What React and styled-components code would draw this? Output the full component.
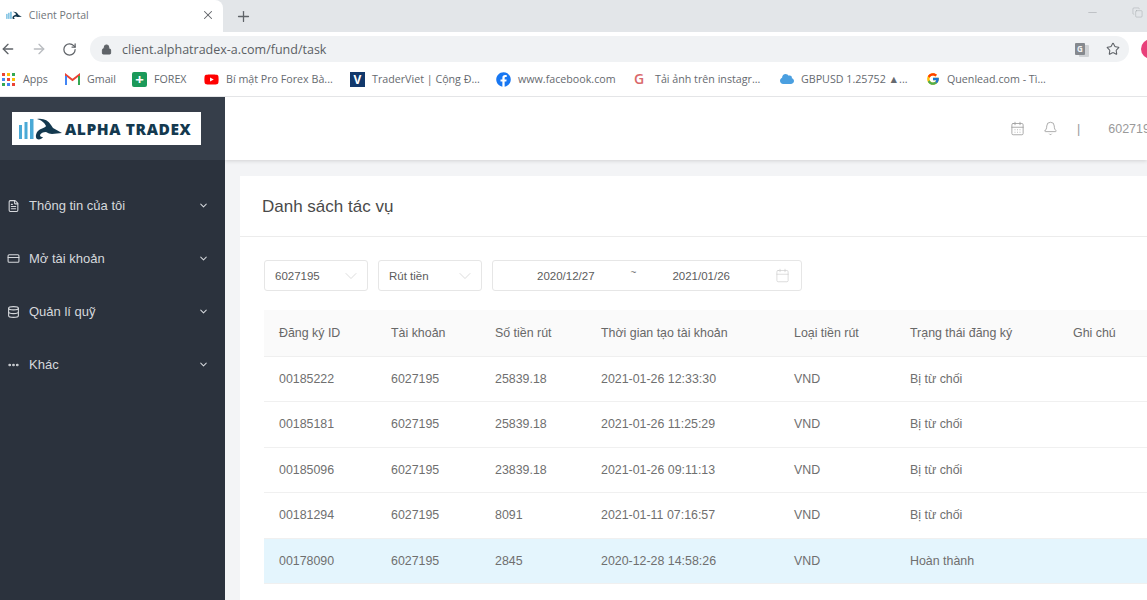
import styled, { createGlobalStyle } from 'styled-components'
import {
  ArrowLeft, ArrowRight, RotateCw, Lock, Star, X, Plus, Minus, Copy,
  FileText, CreditCard, Database, MoreHorizontal, ChevronDown, Calendar, Bell, CalendarDays,
} from 'lucide-react'
import { FaFacebook, FaYoutube, FaCloud } from 'react-icons/fa'
import { FcGoogle } from 'react-icons/fc'

const Global = createGlobalStyle`
  html, body { margin: 0; padding: 0; height: 600px; overflow: hidden; background: #fff; }
  * { box-sizing: border-box; }
  #root { width: 1147px; height: 600px; overflow: hidden; font-family: "Liberation Sans", Arial, sans-serif; }
`

const Window = styled.div`
  width: 1147px;
  height: 600px;
  display: flex;
  flex-direction: column;
  overflow: hidden;
`

const TabStrip = styled.div`
  height: 32px;
  flex: none;
  background: #e3e6e9;
  display: flex;
  align-items: center;
`

const Tab = styled.div`
  width: 223px;
  height: 32px;
  background: #fff;
  border-top-right-radius: 8px;
  display: flex;
  align-items: center;
  padding: 0 8px 2px 6px;
  font-family: "Open Sans", sans-serif;
  font-size: 10.5px;
  color: #70757a;
`

const TabTitle = styled.span`
  margin-left: 7px;
  flex: 1;
`

const NewTab = styled.div`
  margin-left: 12px;
  display: flex;
  color: #5f6368;
`

const WinControls = styled.div`
  margin-left: auto;
  display: flex;
  align-items: center;
  gap: 33px;
  padding-right: 4px;
  margin-top: -8px;
  color: #a0a4a8;
`

const Toolbar = styled.div`
  height: 32px;
  flex: none;
  background: #fff;
  display: flex;
  align-items: center;
  padding: 2px 0 0;
`

const NavButton = styled.div`
  width: 31px;
  display: flex;
  color: ${({ $off }) => ($off ? '#b9bcc0' : '#5f6368')};
`

const Omnibox = styled.div`
  margin-left: -3px;
  width: 1039px;
  height: 26px;
  border-radius: 13px;
  background: #f0f2f4;
  display: flex;
  align-items: center;
  padding: 0 9px 0 11px;
  font-family: "Open Sans", sans-serif;
  font-size: 12.5px;
  color: #5b5f64;
`

const Url = styled.span`
  margin-left: 10px;
  flex: 1;
`

const TranslateIcon = styled.div`
  width: 10px;
  height: 12px;
  margin-right: 21px;
  background: #85898e;
  border-radius: 1px;
  box-shadow: 4px 2px 0 0 #cfd2d5;
  font-size: 8px;
  font-weight: 700;
  line-height: 12px;
  text-align: center;
  color: #f0f2f4;
`

const Avatar = styled.div`
  position: absolute;
  top: 39px;
  left: 1141px;
  width: 20px;
  height: 20px;
  border-radius: 50%;
  background: #e8407a;
`

const Bookmarks = styled.div`
  height: 33px;
  flex: none;
  background: #fff;
  border-bottom: 1px solid #e4e5e7;
  display: flex;
  align-items: center;
  padding: 0 0 2px 2px;
  font-family: "Open Sans", sans-serif;
  font-size: 10.7px;
  color: #666a6f;
`

const Bookmark = styled.div`
  width: ${({ $w }) => $w}px;
  flex: none;
  display: flex;
  align-items: center;
  gap: 7px;
  white-space: nowrap;
`

const AppsGrid = styled.div`
  width: 14px;
  display: grid;
  grid-template-columns: repeat(3, 3px);
  gap: 2px;
`

const AppsDot = styled.i`
  width: 3px;
  height: 3px;
  background: ${({ $c }) => $c};
`

const ForexIcon = styled.div`
  width: 15px;
  height: 15px;
  border-radius: 2px;
  background: #1b9a5a;
  color: #fff;
  font-size: 15px;
  font-weight: 700;
  line-height: 14px;
  text-align: center;
`

const TraderIcon = styled.div`
  width: 15px;
  height: 15px;
  background: #12386b;
  color: #fff;
  font-size: 12px;
  font-weight: 700;
  line-height: 15px;
  text-align: center;
`

const GLetter = styled.span`
  width: 14px;
  font-size: 14px;
  font-weight: 600;
  color: #d9686a;
  line-height: 14px;
`

const AppBody = styled.div`
  flex: 1;
  min-height: 0;
  display: flex;
`

const Sidebar = styled.aside`
  width: 225px;
  flex: none;
  background: #2b323d;
  color: #d5d8dc;
`

const LogoArea = styled.div`
  height: 63px;
  background: #363e4a;
  padding: 15px 0 0 12px;
`

const Logo = styled.div`
  width: 189px;
  height: 33px;
  background: #fff;
  display: flex;
  align-items: center;
  padding-left: 6px;
  gap: 3px;
`

const LogoText = styled.span`
  font-family: "Open Sans", sans-serif;
  font-weight: 800;
  font-size: 15.5px;
  letter-spacing: 0.6px;
  color: #14394f;
  white-space: nowrap;
`

const Menu = styled.nav`
  padding-top: 19px;
`

const MenuItem = styled.div`
  height: 53px;
  display: flex;
  align-items: center;
  padding: 0 16px 0 7px;
  font-size: 13px;
  gap: 9px;
`

const MenuIcon = styled.div`
  width: 13px;
  display: flex;
  justify-content: center;
`

const MenuLabel = styled.span`
  flex: 1;
`

const Main = styled.main`
  flex: 1;
  min-width: 0;
  background: #f3f4f6;
  overflow: hidden;
`

const TopBar = styled.header`
  height: 63px;
  background: #fff;
  box-shadow: 0 1px 4px rgba(0, 0, 0, 0.14);
  display: flex;
  align-items: center;
  padding-left: 785px;
  color: #9a9a9a;
  font-size: 12.5px;
  white-space: nowrap;
`

const TopDivider = styled.span`
  margin: 0 28px 0 19px;
`

const TopIcon = styled.div`
  display: flex;
  margin-right: ${({ $gap }) => $gap || 0}px;
`

const Card = styled.section`
  margin: 16px 0 0 15px;
  width: 1000px;
  background: #fff;
  height: 440px;
`

const CardTitle = styled.h2`
  margin: 0;
  height: 61px;
  border-bottom: 1px solid #ececec;
  padding: 20px 0 0 22px;
  font-size: 17px;
  line-height: 22px;
  font-weight: 400;
  color: #4a4a4a;
`

const CardBody = styled.div`
  padding: 23px 0 0 24px;
`

const Filters = styled.div`
  display: flex;
  gap: 10px;
  margin-bottom: 19px;
`

const Control = styled.div`
  width: ${({ $w }) => $w}px;
  height: 31px;
  border: 1px solid #e6e6e6;
  border-radius: 3px;
  display: flex;
  align-items: center;
  font-size: 11.5px;
  color: #5c5c5c;
  background: #fff;
`

const SelectText = styled.span`
  flex: 1;
  padding-left: 10px;
`

const SelectArrow = styled.div`
  display: flex;
  color: #c3c3c3;
  margin-right: 6px;
`

const DateText = styled.span`
  margin-left: ${({ $ml }) => $ml}px;
  white-space: nowrap;
`

const Tilde = styled.span`
  margin-left: 36px;
  margin-top: -6px;
  color: #777;
  font-size: 10px;
`

const DateIcon = styled.div`
  margin-left: 45px;
  display: flex;
  color: #c9c9c9;
`

const Table = styled.table`
  border-collapse: collapse;
  table-layout: fixed;
  width: 1000px;
  font-size: 12.4px;
`

const Th = styled.th`
  width: ${({ $w }) => $w}px;
  height: 46px;
  padding: 0 0 0 15px;
  text-align: left;
  font-weight: 400;
  background: #fafafa;
  border-bottom: 1px solid #efefef;
  color: #686868;
  white-space: nowrap;
`

const Td = styled.td`
  height: 45.5px;
  padding: 0 0 0 15px;
  color: #6f6f6f;
  border-bottom: 1px solid #f0f0f0;
  background: ${({ $active }) => ($active ? '#e4f5fd' : '#fff')};
  white-space: nowrap;
`

const APP_DOTS = ['#ea4335', '#fbbc05', '#34a853', '#4285f4', '#ea4335', '#fbbc05', '#34a853', '#4285f4', '#ea4335']

const MENU = [
  { icon: <FileText size={14} />, label: 'Thông tin của tôi' },
  { icon: <CreditCard size={15} />, label: 'Mở tài khoản' },
  { icon: <Database size={14} />, label: 'Quản lí quỹ' },
  { icon: <MoreHorizontal size={14} strokeWidth={3} />, label: 'Khác' },
]

const COLS = [
  ['Đăng ký ID', 112], ['Tài khoản', 104], ['Số tiền rút', 106], ['Thời gian tạo tài khoản', 193],
  ['Loại tiền rút', 116], ['Trạng thái đăng ký', 163], ['Ghi chú', 206],
]

const ROWS = [
  ['00185222', '25839.18', '2021-01-26 12:33:30', 'Bị từ chối'],
  ['00185181', '25839.18', '2021-01-26 11:25:29', 'Bị từ chối'],
  ['00185096', '23839.18', '2021-01-26 09:11:13', 'Bị từ chối'],
  ['00181294', '8091', '2021-01-11 07:16:57', 'Bị từ chối'],
  ['00178090', '2845', '2020-12-28 14:58:26', 'Hoàn thành'],
]

function Mark({ small }) {
  const s = small ? 0.36 : 1
  return (
    <svg width={44 * s} height={24 * s} viewBox="0 0 44 24">
      <rect x="1" y="8" width="3" height="14" fill="#4aa9d6" />
      <rect x="6.500" y="5" width="3" height="17" fill="#4aa9d6" />
      <rect x="12" y="2" width="3.500" height="20" fill="#4aa9d6" />
      <path d="M19 2c6-1 11 1 14 6l2 3 9 5-10 1c-2 0-4-1-6-2-3 0-5 1-6 3 0 2 2 2 3 2-1 2-4 3-6 2-2-2-1-6 1-8 3-3 7-3 8-5-1-3-5-6-9-7z" fill="#14394f" />
    </svg>
  )
}

export default function App() {
  return (
    <Window>
      <Global />
      <TabStrip>
        <Tab>
          <Mark small />
          <TabTitle>Client Portal</TabTitle>
          <X size={14} strokeWidth={1.8} color="#5f6368" />
        </Tab>
        <NewTab><Plus size={17} strokeWidth={1.8} /></NewTab>
        <WinControls>
          <Minus size={13} strokeWidth={1} />
          <Copy size={11} strokeWidth={1} />
        </WinControls>
      </TabStrip>
      <Toolbar>
        <NavButton><ArrowLeft size={16} /></NavButton>
        <NavButton $off><ArrowRight size={16} /></NavButton>
        <NavButton><RotateCw size={15} /></NavButton>
        <Omnibox>
          <Lock size={11} fill="#5f6368" />
          <Url>client.alphatradex-a.com/fund/task</Url>
          <TranslateIcon>G</TranslateIcon>
          <Star size={14} strokeWidth={1.8} color="#5f6368" />
        </Omnibox>
        <Avatar />
      </Toolbar>
      <Bookmarks>
        <Bookmark $w={63}>
          <AppsGrid>{APP_DOTS.map((c, i) => <AppsDot key={i} $c={c} />)}</AppsGrid>
          <span>Apps</span>
        </Bookmark>
        <Bookmark $w={67}>
          <svg width="15" height="12" viewBox="0 0 15 12">
            <path d="M1 12V2l6.500 5L14 2v10" fill="none" stroke="#ea4335" strokeWidth="2" />
            <path d="M1 12V3" stroke="#4285f4" strokeWidth="2" />
            <path d="M14 12V3" stroke="#34a853" strokeWidth="2" />
          </svg>
          <span>Gmail</span>
        </Bookmark>
        <Bookmark $w={72}><ForexIcon>+</ForexIcon><span>FOREX</span></Bookmark>
        <Bookmark $w={146}><FaYoutube size={15} color="#f00" /><span>Bí mật Pro Forex Bà...</span></Bookmark>
        <Bookmark $w={146}><TraderIcon>V</TraderIcon><span>TraderViet | Cộng Đ...</span></Bookmark>
        <Bookmark $w={138}><FaFacebook size={15} color="#1877f2" /><span>www.facebook.com</span></Bookmark>
        <Bookmark $w={146}><GLetter>G</GLetter><span>Tải ảnh trên instagr...</span></Bookmark>
        <Bookmark $w={146}><FaCloud size={14} color="#4a9fe0" /><span>GBPUSD 1.25752 ▲...</span></Bookmark>
        <Bookmark $w={130}><FcGoogle size={14} /><span>Quenlead.com - Tì...</span></Bookmark>
      </Bookmarks>
      <AppBody>
        <Sidebar>
          <LogoArea>
            <Logo>
              <Mark />
              <LogoText>ALPHA TRADEX</LogoText>
            </Logo>
          </LogoArea>
          <Menu>
            {MENU.map((m) => (
              <MenuItem key={m.label}>
                <MenuIcon>{m.icon}</MenuIcon>
                <MenuLabel>{m.label}</MenuLabel>
                <ChevronDown size={11} strokeWidth={2.2} />
              </MenuItem>
            ))}
          </Menu>
        </Sidebar>
        <Main>
          <TopBar>
            <TopIcon $gap={18}><CalendarDays size={15} strokeWidth={1.3} /></TopIcon>
            <TopIcon><Bell size={15} strokeWidth={1.3} /></TopIcon>
            <TopDivider>|</TopDivider>
            <span>6027195</span>
          </TopBar>
          <Card>
            <CardTitle>Danh sách tác vụ</CardTitle>
            <CardBody>
              <Filters>
                <Control $w={104}>
                  <SelectText>6027195</SelectText>
                  <SelectArrow><ChevronDown size={20} strokeWidth={0.7} /></SelectArrow>
                </Control>
                <Control $w={104}>
                  <SelectText>Rút tiền</SelectText>
                  <SelectArrow><ChevronDown size={20} strokeWidth={0.7} /></SelectArrow>
                </Control>
                <Control $w={310}>
                  <DateText $ml={44}>2020/12/27</DateText>
                  <Tilde>~</Tilde>
                  <DateText $ml={36}>2021/01/26</DateText>
                  <DateIcon><Calendar size={15} strokeWidth={1} /></DateIcon>
                </Control>
              </Filters>
              <Table>
                <thead>
                  <tr>
                    {COLS.map(([label, w]) => <Th key={label} $w={w}>{label}</Th>)}
                  </tr>
                </thead>
                <tbody>
                  {ROWS.map((r, i) => {
                    const active = i === ROWS.length - 1
                    return (
                      <tr key={r[0]}>
                        <Td $active={active}>{r[0]}</Td>
                        <Td $active={active}>6027195</Td>
                        <Td $active={active}>{r[1]}</Td>
                        <Td $active={active}>{r[2]}</Td>
                        <Td $active={active}>VND</Td>
                        <Td $active={active}>{r[3]}</Td>
                        <Td $active={active} />
                      </tr>
                    )
                  })}
                </tbody>
              </Table>
            </CardBody>
          </Card>
        </Main>
      </AppBody>
    </Window>
  )
}
